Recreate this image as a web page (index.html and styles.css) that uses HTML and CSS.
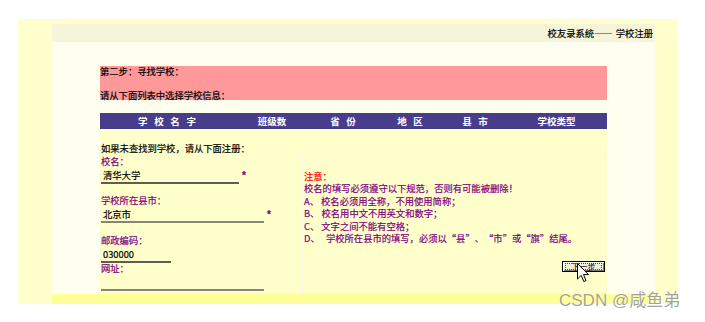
FILE: index.html
```html
<!DOCTYPE html>
<html lang="zh-CN">
<head>
   <meta charset="utf-8">
   <title>校友录系统—— 学校注册</title>
   <link rel="stylesheet" href="styles.css">
</head>
<body>
   <div class="frame">
      <div class="title-bar">校友录系统<span class="dash">——</span> 学校注册</div>
      <div class="main">
         <div class="step">
            <div>第二步：寻找学校：</div>
            <div>请从下面列表中选择学校信息：</div>
         </div>

         <div class="list-head">
            <div>学 校 名 字</div>
            <div>班级数</div>
            <div>省 份</div>
            <div>地 区</div>
            <div>县 市</div>
            <div>学校类型</div>
         </div>
         <div class="list-body">如果未查找到学校，请从下面注册：</div>

         <div class="reg">
            <div class="reg-left">
               <div class="field-label">校名：</div>
               <div class="field">
                  <input class="line-dark w138" type="text" value="清华大学">
                  <span class="star">*</span>
               </div>

               <div class="field-label gap-11">学校所在县市：</div>
               <div class="field">
                  <input class="line-grey w163" type="text" value="北京市">
                  <span class="star">*</span>
               </div>

               <div class="field-label gap-12">邮政编码：</div>
               <div class="field">
                  <input class="line-dark w70" type="text" value="030000">
               </div>

               <div class="field-label">网址：</div>
               <div class="field">
                  <input class="line-grey w163" type="text" value="">
               </div>
            </div>

            <div class="reg-right">
               <div class="notice-title">注意：</div>
               <div>校名的填写必须遵守以下规范，否则有可能被删除！</div>
               <div>A、 校名必须用全称，不用使用简称；</div>
               <div>B、 校名用中文不用英文和数字；</div>
               <div>C、 文字之间不能有空格；</div>
               <div>D、&nbsp;&nbsp;&nbsp;学校所在县市的填写，必须以<span class="ql">“</span>县<span class="qr">”</span>、<span class="ql">“</span>市<span class="qr">”</span>或<span class="ql">“</span>旗<span class="qr">”</span>结尾。</div>
               <button class="next" type="button">下一步</button>
            </div>
         </div>
      </div>
      <div class="strip"></div>
   </div>

   <!-- mouse pointer over the button -->
   <svg class="cursor" width="13" height="20" viewBox="0 0 13 20">
      <path d="M0.5 0.5 L0.5 16 L4.2 12.4 L6.8 18.5 L9 17.6 L6.5 11.6 L11.5 11.6 Z" fill="#fff" stroke="#000" stroke-width="1"/>
   </svg>

   <div class="watermark">CSDN @咸鱼弟</div>
</body>
</html>
```

FILE: styles.css
```css
body {
  margin: 0;
  background: #fff;
  font-family: "Noto Sans CJK SC", sans-serif;
  font-size: 9.3px;
  color: #000;
  -webkit-text-stroke: 0.2px currentColor;
}

/* full-width punctuation, as the old song-ti font draws it */
.dash { letter-spacing: 1px; }
.ql, .qr {
  display: inline-block;
  width: 1em;
}
.ql { text-align: right; }
.qr { text-align: left; }

.frame {
  width: 603px;
  margin: 19px 0 0 18px;
  padding: 5px 23px 0 34px;
  background: #ffffcc;
}

.title-bar {
  height: 18px;
  line-height: 18px;
  padding-right: 2px;
  text-align: right;
  background: #f5f5dc;
}

.main {
  height: 252px;
  box-sizing: border-box;
  padding: 24px 0 0 48px;
  background: #fffff0;
}

.main > div { width: 507px; }

.strip {
  height: 10px;
  background: #ffff99;
}

.step {
  height: 34px;
  display: flex;
  flex-direction: column;
  justify-content: space-between;
  line-height: 10px;
  background: #ff9999;
  margin-bottom: 13px;
}

.list-head {
  display: grid;
  grid-template-columns: 134px 76px 66px 68px 62px 101px;
  height: 16px;
  line-height: 16px;
  background: #483d8b;
  color: #fff;
  font-weight: bold;
  font-size: 9.5px;
  word-spacing: 4.5px;
  text-align: center;
  -webkit-text-stroke: 0;
}

.list-body {
  height: 26px;
  box-sizing: border-box;
  display: flex;
  align-items: flex-end;
  padding: 0 0 1px 1px;
  line-height: 12.4px;
  background: #ffffcc;
}

.reg {
  display: grid;
  grid-template-columns: 202px 304px;
  column-gap: 1px;
  height: 139px;
  box-sizing: border-box;
  padding: 1px 0;
  background: #f7f7e2;
}

.reg-left {
  padding-left: 1px;
  background: #ffffcc;
}

.field-label {
  line-height: 11px;
  color: #800080;
}
.gap-11 { margin-top: 11px; }
.gap-12 { margin-top: 12px; }

.field {
  display: flex;
  align-items: center;
  gap: 3px;
  height: 17px;
}

.field input {
  box-sizing: border-box;
  height: 17px;
  margin: 0;
  padding: 0 2px;
  border: 0;
  background: transparent;
  font: inherit;
  line-height: 15px;
  color: #000;
  outline: none;
  -webkit-text-stroke: 0.2px #000;
}
.line-dark { border-bottom: 2px solid #5e5e50 !important; }
.line-grey { border-bottom: 2px solid #85857a !important; }
.w138 { width: 138px; }
.w163 { width: 163px; }
.w70 { width: 70px; }

.star {
  color: #800080;
  font-family: "Liberation Sans", sans-serif;
  font-size: 10px;
  font-weight: bold;
}

.reg-right {
  display: flex;
  flex-direction: column;
  padding: 14px 1px 0 1px;
  line-height: 12.4px;
  color: #800080;
  background: #ffffcc;
}

.notice-title { color: #ff0000; }

.next {
  align-self: flex-end;
  width: 43px;
  height: 11px;
  box-sizing: border-box;
  margin: 16.3px 1px 0 0;
  padding: 0;
  border: 1px solid #000;
  background: #efefd8;
  box-shadow: inset 1px 1px 0 #fff, inset -1px -1px 0 #777;
  outline: none;
  font-family: inherit;
  font-size: 8px;
  line-height: 9px;
  color: #000;
  overflow: visible;
  -webkit-text-stroke: 0;
  position: relative;
}

/* dotted focus rectangle of the default button */
.next::after {
  content: '';
  position: absolute;
  top: 1px;
  left: 2px;
  right: 2px;
  bottom: 1px;
  border: 1px dotted #444;
}

.cursor {
  position: absolute;
  left: 577px;
  top: 263px;
}

.watermark {
  position: absolute;
  left: 559px;
  top: 291px;
  font-family: "Liberation Sans", "Noto Sans CJK SC", sans-serif;
  font-size: 17px;
  line-height: 20px;
  color: rgba(120, 120, 120, 0.7);
  text-shadow: 0 0 1px #fff;
  -webkit-text-stroke: 0;
}
```
